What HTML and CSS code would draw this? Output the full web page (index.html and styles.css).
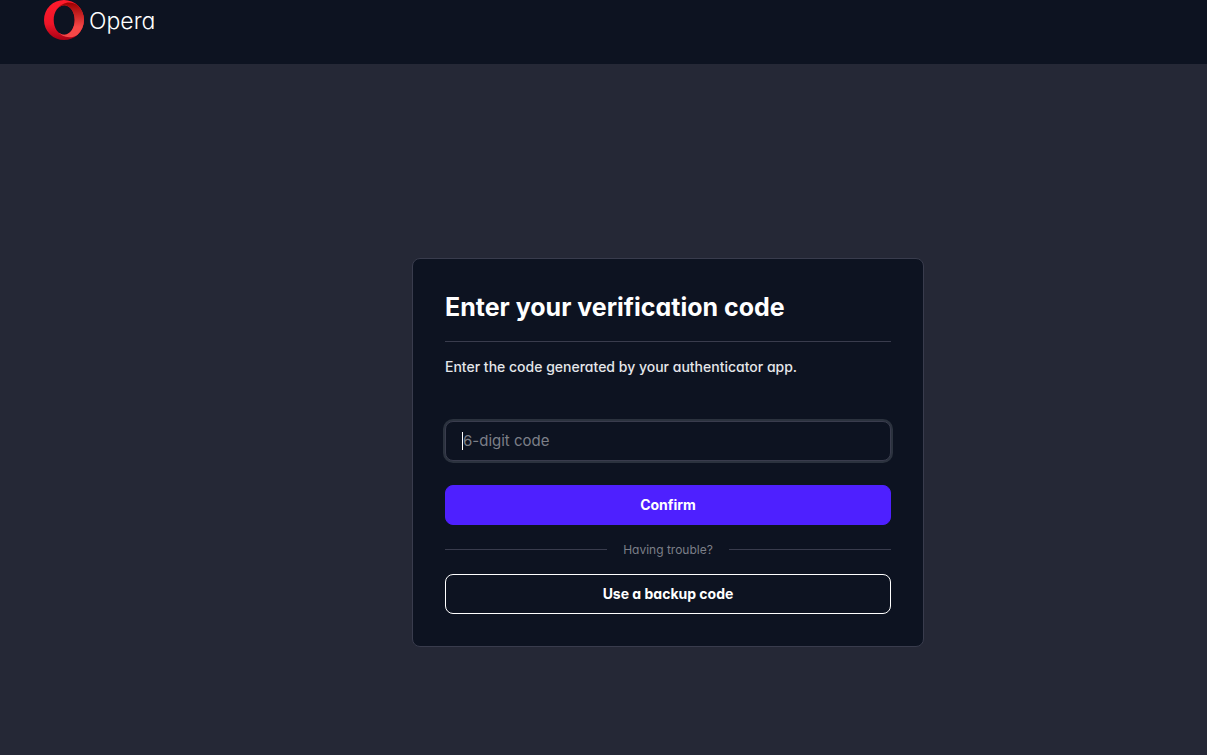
FILE: index.html
```html
<!DOCTYPE html>
<html lang="en">
<head>
  <meta charset="UTF-8">
  <meta name="viewport" content="width=device-width, initial-scale=1">
  <title>Opera account - verification</title>
  <link rel="stylesheet" href="styles.css">
</head>
<body>

<header class="topbar">
  <a class="brand" href="#">
    <svg class="brand-mark" viewBox="0 0 40 40" aria-hidden="true">
      <defs>
        <linearGradient id="ring" x1="0" y1="0" x2="0" y2="1">
          <stop offset="0" stop-color="#ff1b2d"/>
          <stop offset="0.6" stop-color="#ee1528"/>
          <stop offset="1" stop-color="#a70014"/>
        </linearGradient>
        <linearGradient id="fold" x1="0" y1="0" x2="0" y2="1">
          <stop offset="0" stop-color="#9c0000"/>
          <stop offset="0.7" stop-color="#f44747"/>
          <stop offset="1" stop-color="#f44747"/>
        </linearGradient>
      </defs>
      <path fill="url(#ring)" fill-rule="evenodd" d="M20 0a20 20 0 1 0 0 40a20 20 0 1 0 0-40zM20.200 5.300c5.800 0 10.500 6.600 10.500 14.700s-4.700 14.700-10.500 14.700S9.700 28.100 9.700 20 14.400 5.300 20.200 5.300z"/>
      <path fill="url(#fold)" d="M13.500 8.700c1.800-2.100 4.200-3.400 6.700-3.400 5.800 0 10.500 6.600 10.500 14.700s-4.700 14.700-10.500 14.700c-2.500 0-4.900-1.300-6.700-3.400 2.900 3.700 7.100 6 11.800 6 2.900 0 5.700-.9 8-2.400a20 20 0 0 0 0-29.800c-2.300-1.600-5.100-2.500-8-2.500-4.700 0-8.900 2.300-11.800 6.100z"/>
    </svg>
    <span class="brand-name">Opera</span>
  </a>
</header>

<main class="page">
  <form class="card">
    <h1 class="card-title">Enter your verification code</h1>
    <label class="card-text" for="code">Enter the code generated by your authenticator app.</label>
    <input class="code-input" id="code" type="text" inputmode="numeric" placeholder="6-digit code" autocomplete="one-time-code" autofocus>
    <button class="btn btn-primary" type="submit">Confirm</button>
    <div class="divider">Having trouble?</div>
    <button class="btn btn-outline" type="button">Use a backup code</button>
  </form>
</main>

</body>
</html>
```
FILE: styles.css
```css
* { box-sizing: border-box; }

body {
  margin: 0;
  min-height: 100vh;
  display: flex;
  flex-direction: column;
  background: #252836;
  color: #fff;
  font-family: Inter, "Liberation Sans", sans-serif;
  font-feature-settings: "cv11"; /* single-storey a */
}

/* Top bar */
.topbar {
  height: 64px;
  padding: 0 44px;
  background: #0d1321;
}
.brand {
  display: inline-flex;
  align-items: center;
  gap: 5px;
  color: #fff;
  text-decoration: none;
}
.brand-mark { width: 40px; height: 40px; }
.brand-name { padding-top: 2px; font-size: 23px; font-weight: 300; line-height: 38px; }

/* Card */
.page {
  flex: 1;
  display: flex;
  align-items: center;
  justify-content: center;
  padding: 86px 0 0 129px;
}
.card {
  display: flex;
  flex-direction: column;
  width: 100%;
  max-width: 512px;
  padding: 32px;
  background: #0d1321;
  border: 1px solid #393c4d;
  border-radius: 8px;
}
.card-title {
  margin: 0;
  padding-bottom: 18px;
  border-bottom: 1px solid #393c4d;
  font-size: 25px;
  font-weight: 700;
  line-height: 32px;
}
.card-text {
  margin: 15px 0 44px;
  color: #e4e6ea;
  font-size: 14px;
  font-weight: 500;
  line-height: 20px;
}

.code-input {
  width: 100%;
  height: 40px;
  padding: 0 17px 2px;
  background: #0d1321;
  border: 1px solid #393c4d;
  border-radius: 8px;
  color: #fff;
  font: inherit;
  font-feature-settings: inherit;
  font-size: 15px;
  outline: none;
}
.code-input:focus { box-shadow: 0 0 0 2px #2b323e; }
.code-input::placeholder { color: #7c7f88; opacity: 1; }

/* steady caret while the field is empty */
.code-input:focus:placeholder-shown {
  caret-color: transparent;
  background-image: linear-gradient(#fff, #fff);
  background-position: 16px center;
  background-size: 1px 18px;
  background-repeat: no-repeat;
}

.btn {
  height: 40px;
  padding: 0 16px 2px;
  border: 1px solid #fff;
  border-radius: 8px;
  color: #fff;
  font: inherit;
  font-feature-settings: inherit;
  font-size: 14px;
  font-weight: 700;
  cursor: pointer;
}
.btn-primary { margin-top: 24px; background: #4e20ff; border-color: #4e20ff; }
.btn-outline { background: transparent; }

.divider {
  display: flex;
  align-items: center;
  gap: 16px;
  margin: 16px 0;
  color: #7c7f88;
  font-size: 12px;
  line-height: 17px;
}
.divider::before,
.divider::after {
  content: "";
  flex: 1;
  height: 1px;
  background: #393c4d;
}
```
